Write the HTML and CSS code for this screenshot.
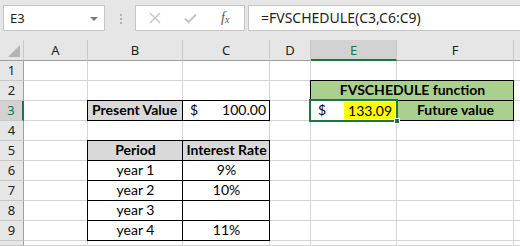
FILE: index.html
```html
<!DOCTYPE html>
<html lang="en">
<head>
  <meta charset="utf-8">
  <title>FVSCHEDULE</title>
  <link rel="stylesheet" href="styles.css">
</head>
<body>

  <div class="formula-bar">
    <div class="name-box">
      <span>E3</span>
      <span class="caret"></span>
    </div>
    <div class="grip"><i></i><i></i><i></i></div>
    <div class="fx-buttons">
      <svg width="12" height="12" viewBox="0 0 12 12"><path d="M1 1 L11 11 M11 1 L1 11" stroke="#c4c4c4" stroke-width="1.4" fill="none"/></svg>
      <svg width="13" height="11" viewBox="0 0 13 11"><path d="M1 5.5 L4.5 9 L12 1.5" stroke="#c4c4c4" stroke-width="2" fill="none"/></svg>
      <span class="fx">f<sub>x</sub></span>
    </div>
    <div class="formula">=FVSCHEDULE(C3,C6:C9)</div>
  </div>

  <div class="sheet">
    <!-- header row -->
    <div class="hd corner"><span class="tri"></span></div>
    <div class="hd">A</div>
    <div class="hd">B</div>
    <div class="hd">C</div>
    <div class="hd">D</div>
    <div class="hd sel-col">E</div>
    <div class="hd">F</div>
    <div class="hd"></div>

    <!-- 1 -->
    <div class="rn">1</div>
    <div class="c"></div><div class="c"></div><div class="c"></div><div class="c"></div><div class="c"></div><div class="c"></div><div class="c"></div>

    <!-- 2 -->
    <div class="rn">2</div>
    <div class="c"></div><div class="c"></div><div class="c"></div><div class="c"></div>
    <div class="c box green bold center span2">FVSCHEDULE function</div>
    <div class="c"></div>

    <!-- 3 -->
    <div class="rn sel-row">3</div>
    <div class="c"></div>
    <div class="c box grey bold">Present Value</div>
    <div class="c box money"><span>$</span><span>100.00</span></div>
    <div class="c"></div>
    <div class="c active money"><span>$</span><span class="hl">133.09</span><i class="handle"></i></div>
    <div class="c box green bold center">Future value</div>
    <div class="c"></div>

    <!-- 4 -->
    <div class="rn">4</div>
    <div class="c"></div><div class="c"></div><div class="c"></div><div class="c"></div><div class="c"></div><div class="c"></div><div class="c"></div>

    <!-- 5 -->
    <div class="rn">5</div>
    <div class="c"></div>
    <div class="c box grey bold center">Period</div>
    <div class="c box grey bold center">Interest Rate</div>
    <div class="c"></div><div class="c"></div><div class="c"></div><div class="c"></div>

    <!-- 6 -->
    <div class="rn">6</div>
    <div class="c"></div>
    <div class="c box center">year 1</div>
    <div class="c box center">9%</div>
    <div class="c"></div><div class="c"></div><div class="c"></div><div class="c"></div>

    <!-- 7 -->
    <div class="rn">7</div>
    <div class="c"></div>
    <div class="c box center">year 2</div>
    <div class="c box center">10%</div>
    <div class="c"></div><div class="c"></div><div class="c"></div><div class="c"></div>

    <!-- 8 -->
    <div class="rn">8</div>
    <div class="c"></div>
    <div class="c box center">year 3</div>
    <div class="c box center"></div>
    <div class="c"></div><div class="c"></div><div class="c"></div><div class="c"></div>

    <!-- 9 -->
    <div class="rn">9</div>
    <div class="c"></div>
    <div class="c box center">year 4</div>
    <div class="c box center">11%</div>
    <div class="c"></div><div class="c"></div><div class="c"></div><div class="c"></div>

    <!-- 10, only its top edge shows -->
    <div class="rn"></div>
    <div class="c"></div><div class="c"></div><div class="c"></div><div class="c"></div><div class="c"></div><div class="c"></div><div class="c"></div>
  </div>

</body>
</html>
```

FILE: styles.css
```css
*, *::before, *::after { box-sizing: border-box }

body {
  margin: 0;
  width: 520px;
  height: 246px;
  overflow: hidden;
  background: #fff;
  font: 15px/1 "Noto Sans", sans-serif;
  color: #000;
  --grid: #d4d4d4;
  --head: #e6e6e6;
  --head-sel: #d2d2d2;
  --excel: #217346;
}


/*///////////// Formula bar */

.formula-bar {
  height: 40px;
  background: var(--head);
  display: flex;
  align-items: flex-start;
  padding: 5px 0 0 3px;
}

.name-box,
.fx-buttons,
.formula {
  height: 26px;
  background: #fff;
  border: 1px solid #c6c6c6;
  display: flex;
  align-items: center;
}

.name-box {
  width: 102px;
  padding: 0 6px 0 6px;
  justify-content: space-between;
  font-size: 13px;
  color: #222;
}

.caret {
  border: 4px solid transparent;
  border-top: 4px solid #7a7a7a;
  border-bottom: 0;
  margin-top: 1px;
}

.grip {
  width: 30px;
  display: flex;
  flex-direction: column;
  align-items: center;
  gap: 2px;
  padding: 9px 0 0 2px;
}

.grip i {
  width: 2px;
  height: 2px;
  background: #b0b0b0;
}

.fx-buttons {
  width: 110px;
  padding: 0 0 0 13px;
  gap: 23px;
}

.fx {
  font: italic 14px "Liberation Serif", serif;
  color: #555;
  margin-left: 1px;
}

.fx sub {
  font-size: 10px;
  vertical-align: -1px;
}

.formula {
  flex: 1;
  margin-left: 3px;
  border-right: none;
  padding-left: 12px;
  font-size: 14px;
  color: #222;
}


/*///////////// Sheet */

.sheet {
  display: grid;
  grid-template-columns: 24px 64px 95px 87px 41px 86px 117px 1fr;
  grid-template-rows: 21px repeat(9, 20px) 5px;
}

.hd,
.rn {
  background: var(--head);
  display: flex;
  align-items: center;
  justify-content: center;
  font-size: 13px;
  color: #222;
}

.hd {
  border-right: 1px solid #c8c8c8;
  border-bottom: 1px solid #9e9e9e;
  padding-top: 1px;
}

.rn {
  border-bottom: 1px solid #c8c8c8;
  border-right: 1px solid #9e9e9e;
}

.corner {
  position: relative;
}

.tri {
  position: absolute;
  right: 3px;
  bottom: 3px;
  border-style: solid;
  border-width: 0 0 12px 12px;
  border-color: transparent transparent #b4b4b4 transparent;
}

.sel-col {
  background: var(--head-sel);
  color: var(--excel);
  border-bottom: 2px solid var(--excel);
}

.sel-row {
  background: var(--head-sel);
  color: var(--excel);
  border-right: 2px solid var(--excel);
}

.c {
  border-right: 1px solid var(--grid);
  border-bottom: 1px solid var(--grid);
  font: 14px/1 "Lato", sans-serif;
  display: flex;
  align-items: flex-end;
  padding: 0 3px 3px 4px;
  white-space: nowrap;
}

.box {
  border-color: #000;
  box-shadow: -1px 0 0 #000, 0 -1px 0 #000, -1px -1px 0 #000;
}

.grey { background: #d9d9d9; }
.green { background: #a9d08e; }
.bold { font-weight: bold; }
.center { justify-content: center; }
.span2 { grid-column: span 2; }

.money {
  justify-content: space-between;
  padding-left: 7px;
}

.active {
  position: relative;
}

.active::before {
  content: '';
  position: absolute;
  left: -2px;
  top: -2px;
  right: -2px;
  bottom: -2px;
  border: 2px solid var(--excel);
}

.hl {
  background: #ffff00;
  padding: 2px 3px 1px 4px;
  margin: 0 -2px -2px 0;
}

.handle {
  position: absolute;
  right: -4px;
  bottom: -4px;
  width: 6px;
  height: 6px;
  background: var(--excel);
  border: 1px solid #fff;
  z-index: 2;
}
```
